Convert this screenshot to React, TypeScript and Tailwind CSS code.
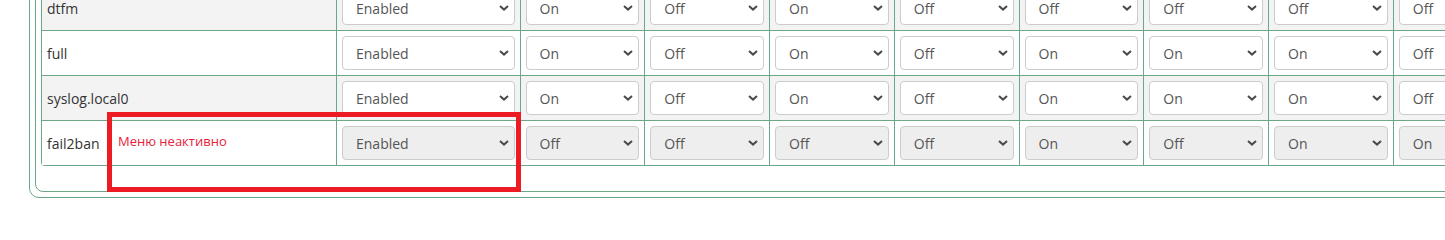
const cols = ['w-[295px]', 'w-[183.5px]'];
const small = 'w-[124.75px]';

type Row = { name: string; values: string[]; shaded: boolean; disabled?: boolean };

const rows: Row[] = [
  { name: 'dtfm', shaded: true, values: ['On', 'Off', 'On', 'Off', 'Off', 'Off', 'Off', 'Off', 'Off'] },
  { name: 'full', shaded: false, values: ['On', 'Off', 'On', 'Off', 'On', 'On', 'On', 'Off', 'Off'] },
  { name: 'syslog.local0', shaded: true, values: ['On', 'Off', 'On', 'Off', 'On', 'On', 'On', 'Off', 'Off'] },
  { name: 'fail2ban', shaded: false, disabled: true, values: ['Off', 'Off', 'Off', 'Off', 'On', 'Off', 'On', 'On', 'Off'] },
];

function Select({ value, options, disabled }: { value: string; options: string[]; disabled?: boolean }) {
  return (
    <div className="relative w-full">
      <select
        defaultValue={value}
        disabled={disabled}
        className={`h-[34px] w-full appearance-none rounded-[4px] border border-[#ccc] pl-[13px] pr-[20px] text-[14px] text-[#555] outline-none ${
          disabled ? 'bg-[#eee]' : 'bg-white'
        }`}
      >
        {options.map((o) => (
          <option key={o}>{o}</option>
        ))}
      </select>
      {/* chevron */}
      <svg
        className="pointer-events-none absolute right-[6px] top-1/2 -translate-y-1/2"
        width="10"
        height="6"
        viewBox="0 0 10 6"
        fill="none"
      >
        <path d="M1 1l4 3.6L9 1" stroke="#4a4a4a" strokeWidth="2" />
      </svg>
    </div>
  );
}

export default function App() {
  return (
    <div
      className="relative flex h-[219px] w-[1445px] flex-col justify-end overflow-hidden bg-white pb-[21px]"
      style={{ fontFamily: '"Open Sans", "Noto Sans", sans-serif' }}
    >
      {/* Outer panel */}
      <div className="ml-[29px] w-[1700px] shrink-0 rounded-[10px] border border-[#6aa889] p-[5px]">
        {/* Inner panel */}
        <div className="rounded-[8px] border border-[#6aa889] pb-[25px] pl-[5px]">
          <div className="w-fit rounded-bl-[4px] border-b border-l border-[#6aa889]">
            {rows.map((row) => (
              <div key={row.name} className={`flex ${row.shaded ? 'bg-[#f3f3f3]' : 'bg-white'}`}>
                <div className={`${cols[0]} flex shrink-0 items-center border-r border-t border-[#6aa889] p-[5px] text-[14px] text-[#333]`}>
                  {row.name}
                </div>
                <div className={`${cols[1]} shrink-0 border-r border-t border-[#6aa889] p-[5px]`}>
                  <Select value="Enabled" options={['Enabled', 'Disabled']} disabled={row.disabled} />
                </div>
                {row.values.map((v, i) => (
                  <div key={i} className={`${small} shrink-0 border-r border-t border-[#6aa889] p-[5px]`}>
                    <Select value={v} options={['On', 'Off']} disabled={row.disabled} />
                  </div>
                ))}
              </div>
            ))}
          </div>
        </div>
      </div>

      {/* Annotation */}
      <div className="absolute left-[107px] top-[112px] h-[80px] w-[414px] border-[5px] border-[#ed1c24] pl-[6px] pt-[11px]">
        <span className="text-[13px] leading-[18px] text-[#e8213a]">Меню неактивно</span>
      </div>
    </div>
  );
}
